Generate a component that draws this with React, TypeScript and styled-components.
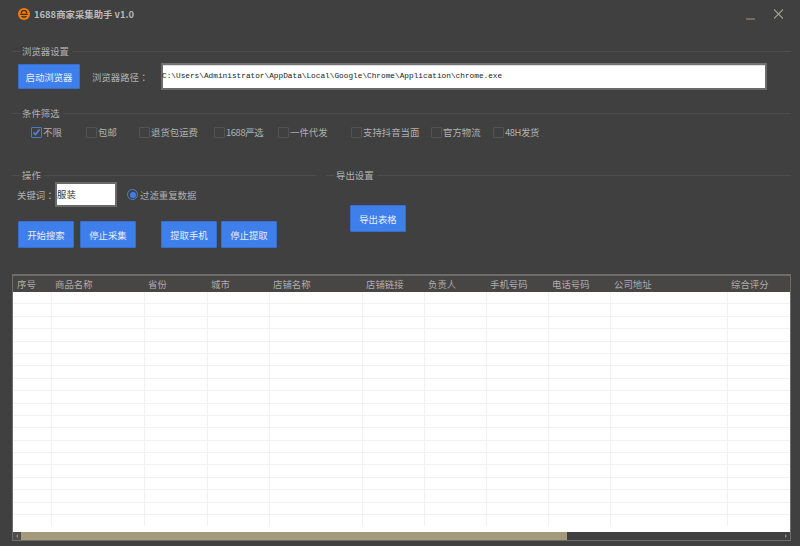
import React from "react";
import styled, { createGlobalStyle } from "styled-components";

const Global = createGlobalStyle`
  html, body { margin: 0; padding: 0; background: #404040; }
  * { box-sizing: border-box; }
`;
const FONT = `"Noto Sans CJK SC", "Noto Sans", sans-serif`;

const Window = styled.div`
  width: 800px; height: 546px; overflow: hidden; background: #404040;
  font-family: ${FONT}; font-size: 9.4px; color: #b0b0b0;
  display: flex; flex-direction: column;
`;
const TitleBar = styled.header`
  height: 30px; flex: none; display: flex; align-items: center; padding: 0 17px 2px 18px;
`;
const Title = styled.h1`
  margin: 0 0 0 4px; font-size: 9.4px; font-weight: 700; color: #b9b9b9; white-space: nowrap;
  font-family: ${FONT};
`;
const Controls = styled.div`
  margin-left: auto; display: flex; align-items: center; gap: 19px;
`;
const Heading = styled.div<{ $top: number }>`
  height: 12px; margin-top: ${p => p.$top}px; display: flex; align-items: center; gap: 3px;
  &::before { content: ""; width: 8px; height: 1px; background: #4d4d4d; margin-right: -1px; }
  &::after { content: ""; flex: 1; height: 1px; background: #4d4d4d; }
`;
const Section = styled.section`
  margin: 0 9px 0 12px;
`;
const BrowserRow = styled.div`
  height: 27px; margin-top: 6px; display: flex; align-items: center; padding-left: 6px;
`;
const Button = styled.button<{ $gap?: number }>`
  height: 27px; width: 56px; flex: none; padding: 0; margin-left: ${p => p.$gap ?? 0}px;
  background: #3f7fec; border: 1px solid #3a6fc8; border-radius: 1px; color: #e8eefa;
  font-family: ${FONT}; font-size: 9.4px;
`;
const StartBrowser = styled(Button)`
  width: 62px; height: 25px;
`;
const Colon = styled.span`
  font-family: "Noto Sans CJK TC", sans-serif;
`;
const PathLabel = styled.label`
  margin-left: 12px; width: 69px; flex: none; white-space: nowrap;
`;
const PathInput = styled.div`
  flex: 1; margin-right: 24px; height: 27px; background: #fff; border: 2px solid #6a6a6a;
  border-top-color: #727272; color: #222; text-indent: -1px;
  font-family: "Liberation Mono", monospace; font-size: 7.77px; line-height: 22px; white-space: nowrap;
  box-shadow: inset 0 1px 0 #ddd;
`;
const FilterRow = styled.div`
  height: 14px; margin-top: 6px; display: flex; align-items: center;
`;
const CheckItem = styled.div<{ $w: number }>`
  width: ${p => p.$w}px; flex: none; display: flex; align-items: center; gap: 1px; white-space: nowrap;
`;
const Box = styled.span<{ $on?: boolean }>`
  width: 11px; height: 11px; flex: none; border-radius: 1px; display: flex; align-items: center; justify-content: center;
  border: 1px solid ${p => (p.$on ? "#4a78c8" : "#555250")};
`;
const FilterList = styled.div`
  display: flex; padding-left: 19px;
`;
const Tiny = styled.span`
  letter-spacing: -0.4px;
`;
const Columns = styled.div`
  display: flex; margin: 30px 9px 0 12px; gap: 10px;
`;
const OpsColumn = styled.div`
  width: 304px; flex: none;
`;
const ExportColumn = styled.div`
  flex: 1;
`;
const KeywordRow = styled.div`
  height: 25px; margin-top: 1px; display: flex; align-items: center; padding-left: 5px;
`;
const KeywordLabel = styled.label`
  width: 38px; flex: none; white-space: nowrap;
`;
const KeywordInput = styled.div`
  width: 62px; height: 25px; flex: none; background: #fff; border: 2px solid #6a6a6a; color: #333;
  font-size: 9.4px; line-height: 21px;
`;
const Radio = styled.span`
  width: 11px; height: 11px; flex: none; margin-left: 10px; margin-right: 2px; border-radius: 50%;
  border: 1px solid #4a7fd8; display: flex; align-items: center; justify-content: center;
  &::after { content: ""; width: 6px; height: 6px; border-radius: 50%; background: #3f7fec; }
`;
const ActionRow = styled.div`
  display: flex; margin-top: 14px; padding-left: 6px;
`;
const ExportButton = styled(Button)`
  margin: 24px 0 0 24px; display: block;
`;
const TableFrame = styled.div`
  margin: 26px 9px 0 12px; height: 267px; border: 1px solid #6c6c6c; border-top-width: 2px;
  background: #fff; display: flex; flex-direction: column; overflow: hidden;
`;
const COLS = "39px 93px 63px 62px 93px 62px 62px 62px 62px 117px 1fr";
const HeaderRow = styled.div`
  height: 16px; flex: none; background: #484545; display: grid; grid-template-columns: ${COLS};
  align-items: center;
`;
const HeaderCell = styled.div`
  padding-left: 3px; color: #adadad; line-height: 16px; white-space: nowrap;
  &:first-child { padding-left: 4px; }
`;
const Body = styled.div`
  flex: 1; background: #fff;
`;
const Row = styled.div<{ $last?: boolean }>`
  height: 12.4px; display: grid; grid-template-columns: ${COLS};
  border-bottom: 1px solid ${p => (p.$last ? "transparent" : "#f2f2f2")};
`;
const Cell = styled.div`
  border-right: 1px solid #f1f1f1;
  &:last-child { border-right: 0; }
`;
const ScrollBar = styled.div`
  height: 8px; flex: none; background: #404040; display: flex; align-items: center; justify-content: space-between;
  position: relative;
`;
const Thumb = styled.div`
  position: absolute; left: 8px; top: 0; bottom: 0; width: 546px; background: #a39a7c;
`;
const Arrow = styled.svg`
  width: 8px; height: 8px; flex: none;
`;

const headers = ["序号", "商品名称", "省份", "城市", "店铺名称", "店铺链接", "负责人", "手机号码", "电话号码", "公司地址", "综合评分"];
const filters: { t: React.ReactNode; w: number; on?: boolean }[] = [
  { t: "不限", w: 55, on: true },
  { t: "包邮", w: 53 },
  { t: "退货包运费", w: 75 },
  { t: <Tiny>1688严选</Tiny>, w: 64 },
  { t: "一件代发", w: 73 },
  { t: "支持抖音当面", w: 80 },
  { t: "官方物流", w: 62 },
  { t: <Tiny>48H发货</Tiny>, w: 60 },
];

const Logo = () => (
  <svg width="12" height="12" viewBox="0 0 12 12" aria-hidden="true" style={{ flex: "none" }}>
    <circle cx="6" cy="6" r="6" fill="#f57c0a" />
    <path d="M3.300 5.200a2.700 2.700 0 0 1 5.400 0" fill="none" stroke="#33261a" strokeWidth="1.2" />
    <path d="M2.300 6.300h7.400" fill="none" stroke="#33261a" strokeWidth="1.200" />
    <path d="M3.500 8.300q2.500 1.600 5 0" fill="none" stroke="#33261a" strokeWidth="1.200" />
  </svg>
);

export default function App() {
  return (
    <Window>
      <Global />
      <TitleBar>
        <Logo />
        <Title>1688商家采集助手 v1.0</Title>
        <Controls>
          <svg width="9" height="20" viewBox="0 0 9 20" aria-hidden="true">
            <path d="M0 15h9" stroke="#8f8b78" strokeWidth="1.2" />
          </svg>
          <svg width="9" height="20" viewBox="0 0 9 20" aria-hidden="true">
            <path d="M0 5.500l9 9M9 5.500L0 14.500" stroke="#a5a18e" strokeWidth="1.200" fill="none" />
          </svg>
        </Controls>
      </TitleBar>

      <Section>
        <Heading $top={15}>浏览器设置</Heading>
        <BrowserRow>
          <StartBrowser>启动浏览器</StartBrowser>
          <PathLabel>浏览器路径<Colon>：</Colon></PathLabel>
          <PathInput>C:\Users\Administrator\AppData\Local\Google\Chrome\Application\chrome.exe</PathInput>
        </BrowserRow>
      </Section>

      <Section>
        <Heading $top={17}>条件筛选</Heading>
        <FilterRow>
          <FilterList>
            {filters.map((f, i) => (
              <CheckItem key={i} $w={f.w}>
                <Box $on={f.on}>
                  {f.on && (
                    <svg width="9" height="9" viewBox="0 0 9 9" aria-hidden="true">
                      <path d="M1.500 4.500l2 2 4-5" fill="none" stroke="#4f86e6" strokeWidth="1.600" />
                    </svg>
                  )}
                </Box>
                {f.t}
              </CheckItem>
            ))}
          </FilterList>
        </FilterRow>
      </Section>

      <Columns>
        <OpsColumn>
          <Heading $top={0}>操作</Heading>
          <KeywordRow>
            <KeywordLabel>关键词<Colon>：</Colon></KeywordLabel>
            <KeywordInput>服装</KeywordInput>
            <Radio />
            过滤重复数据
          </KeywordRow>
          <ActionRow>
            <Button>开始搜索</Button>
            <Button $gap={6}>停止采集</Button>
            <Button $gap={25}>提取手机</Button>
            <Button $gap={4}>停止提取</Button>
          </ActionRow>
        </OpsColumn>
        <ExportColumn>
          <Heading $top={0}>导出设置</Heading>
          <ExportButton>导出表格</ExportButton>
        </ExportColumn>
      </Columns>

      <TableFrame>
        <HeaderRow>
          {headers.map(h => (
            <HeaderCell key={h}>{h}</HeaderCell>
          ))}
        </HeaderRow>
        <Body>
          {Array.from({ length: 19 }, (_, r) => (
            <Row key={r} $last={r === 18}>
              {headers.map(h => (
                <Cell key={h} />
              ))}
            </Row>
          ))}
        </Body>
        <ScrollBar>
          <Arrow viewBox="0 0 8 8" aria-hidden="true">
            <rect width="8" height="8" fill="#4d4d4d" />
            <path d="M5 2L3 4l2 2z" fill="#8f8b78" />
          </Arrow>
          <Thumb />
          <Arrow viewBox="0 0 8 8" aria-hidden="true">
            <path d="M3 2l2 2-2 2z" fill="#8f8b78" />
          </Arrow>
        </ScrollBar>
      </TableFrame>
    </Window>
  );
}
